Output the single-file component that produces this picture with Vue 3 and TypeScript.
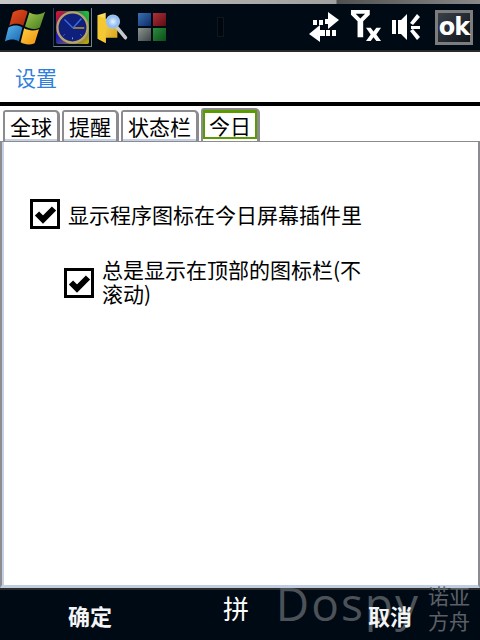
<script setup lang="ts">
import { ref } from 'vue';

const tabs = ['全球', '提醒', '状态栏', '今日'];
const activeTab = ref(3);
const showIcon = ref(true);
const pinTop = ref(true);
</script>

<template>
  <div class="screen">
    <header class="topbar">
      <svg class="logo" width="42" height="36" viewBox="0 0 48 41">
        <defs>
          <linearGradient id="wr" x1="0" y1="0" x2="1" y2="1"><stop offset="0" stop-color="#e8501f" /><stop offset="1" stop-color="#a8280c" /></linearGradient>
          <linearGradient id="wg" x1="0" y1="0" x2="1" y2="1"><stop offset="0" stop-color="#a8c850" /><stop offset="1" stop-color="#3f7a1c" /></linearGradient>
          <linearGradient id="wb" x1="0" y1="0" x2="1" y2="1"><stop offset="0" stop-color="#5cb4ec" /><stop offset="1" stop-color="#1666b0" /></linearGradient>
          <linearGradient id="wy" x1="0" y1="0" x2="1" y2="1"><stop offset="0" stop-color="#ffd040" /><stop offset="1" stop-color="#f09010" /></linearGradient>
        </defs>
        <path d="M10 4 C16 0 22 0 27 3 L22 19 C17 16 11 16 6 19 Z" fill="url(#wr)" />
        <path d="M29 4 C35 7 41 7 47 3 L41 21 C35 24 30 23 24 20 Z" fill="url(#wg)" />
        <path d="M5 21 C11 18 16 18 21 21 L17 37 C12 34 7 34 1 37 Z" fill="url(#wb)" />
        <path d="M23 22 C29 25 34 25 40 23 L35 39 C30 41 24 41 19 38 Z" fill="url(#wy)" />
      </svg>
      <div class="clock-wrap">
        <svg width="33" height="33" viewBox="0 0 35 35">
          <defs>
            <linearGradient id="cbg" x1="0" y1="0" x2="1" y2="1"><stop offset="0" stop-color="#e81818" /><stop offset=".4" stop-color="#1818c0" /><stop offset="1" stop-color="#c8b000" /></linearGradient>
            <linearGradient id="cbg2" x1="1" y1="0" x2="0" y2="1"><stop offset="0" stop-color="#20d020" /><stop offset=".45" stop-color="#20d020" stop-opacity="0" /></linearGradient>
          </defs>
          <rect width="35" height="35" rx="2" fill="url(#cbg)" />
          <rect width="35" height="35" rx="2" fill="url(#cbg2)" />
          <circle cx="17.500" cy="17.500" r="16" fill="#0f1f7c" stroke="#b8a468" stroke-width="2.400" />
          <path d="M18 18 L30 18" stroke="#d8a820" stroke-width="1.400" />
          <path d="M18 18 L27 8 M18 18 L9 9" stroke="#3c6ee0" stroke-width="1.400" />
          <path d="M17.500 28 v2 M9 25 l-1 1 M26 25 l1 1" stroke="#8c9ad8" />
        </svg>
      </div>
      <svg class="finder" width="32" height="34" viewBox="0 0 34 38">
        <defs>
          <linearGradient id="fd" x1="0" y1="0" x2="1" y2="1"><stop offset="0" stop-color="#ffe870" /><stop offset="1" stop-color="#d89c10" /></linearGradient>
          <radialGradient id="gl"><stop offset="0" stop-color="#e8f4ff" /><stop offset="1" stop-color="#7ab0f0" /></radialGradient>
        </defs>
        <path d="M1 6 L10 3 L10 10 L23 13 L23 31 L10 31 L10 37 L1 32 Z" fill="url(#fd)" />
        <path d="M10 10 L10 37 L1 32 L1 6 Z" fill="#f4c830" />
        <path d="M23 20 L32 31" stroke="#c8c8c8" stroke-width="4" stroke-linecap="round" />
        <circle cx="18" cy="13" r="7" fill="url(#gl)" stroke="#9cc0e8" stroke-width="2" />
      </svg>
      <div class="app-grid">
        <i class="sq sq-blue"></i>
        <i class="sq sq-red"></i>
        <i class="sq sq-gray"></i>
        <i class="sq sq-green"></i>
      </div>
      <i class="ghost"></i>
      <div class="spacer"></div>
      <svg width="32" height="32" viewBox="0 0 32 32" fill="#fff">
        <path d="M5 9 h4 v5 h-4 Z M11 9 h4 v5 h-4 Z M17 8 h3 v-7 L31 9 L20 18 v-5 h-3 Z" />
        <path d="M18 19 h4 v6 h-4 Z M24 19 h4 v6 h-4 Z M12 14 v5 h5 v6 h-5 v6 L1 23 Z" />
      </svg>
      <svg class="signal" width="32" height="31" viewBox="0 0 32 33" fill="#fff">
        <path d="M0 0 h20 v5 l-7 7 v17 h-6 V12 L0 5 Z M5 4 l5 5 l5 -5 Z" fill-rule="evenodd" />
        <path d="M16 19 h5 l3 4 l3 -4 h5 l-5 7 l5 7 h-5 l-3 -4 l-3 4 h-5 l5 -7 Z" />
      </svg>
      <svg class="sound" width="30" height="32" viewBox="0 0 30 32" fill="#fff">
        <path d="M1 9 h4 v14 H1 Z M7 9 h3 l6 -6 v26 l-6 -6 H7 Z" />
        <path d="M19 12 L26 3 L29 6 L22 14 Z M20 15 H29 V18 H20 Z M19 20 L22 18 L29 26 L26 29 Z" />
      </svg>
      <button class="ok" type="button">ok</button>
    </header>

    <div class="title">设置</div>

    <nav class="tabs">
      <span
        v-for="(tab, i) in tabs"
        :key="tab"
        class="tab"
        :class="{ active: i === activeTab }"
      ><span class="tab-in">{{ tab }}</span></span>
    </nav>

    <main class="panel">
      <label class="check first">
        <input v-model="showIcon" type="checkbox" />
        <svg class="box" viewBox="0 0 30 30">
          <rect x="1.500" y="1.500" width="27" height="27" fill="#fff" stroke="#000" stroke-width="3" />
          <path d="M7 14.500 L13 20.500 L24 9.500" fill="none" stroke="#000" stroke-width="6" />
        </svg>
        <span>显示程序图标在今日屏幕插件里</span>
      </label>
      <label class="check second">
        <input v-model="pinTop" type="checkbox" />
        <svg class="box" viewBox="0 0 30 30">
          <rect x="1.500" y="1.500" width="27" height="27" fill="#fff" stroke="#000" stroke-width="3" />
          <path d="M7 14.500 L13 20.500 L24 9.500" fill="none" stroke="#000" stroke-width="6" />
        </svg>
        <span>总是显示在顶部的图标栏(不滚动)</span>
      </label>
    </main>

    <footer class="softkeys">
      <span class="key">确定</span>
      <span class="ime">拼</span>
      <span class="key">取消</span>
    </footer>

    <div class="watermark">
      <span class="brand">Dospy</span>
      <span class="brand-cn">诺亚<br />方舟</span>
    </div>
  </div>
</template>

<style scoped>
.screen {
  position: relative;
  width: 480px;
  height: 640px;
  display: flex;
  flex-direction: column;
  overflow: hidden;
  background: #fff;
  font-family: "Noto Sans CJK SC", "Liberation Sans", sans-serif;
  color: #000;
}

.topbar {
  flex: none;
  height: 52px;
  box-sizing: border-box;
  display: flex;
  align-items: center;
  padding: 4px 7px 0 4px;
  background: linear-gradient(to right, #c8c8c8 0, #a0a0a0 336px, #505050 337px, #888 480px) top / 100% 4px no-repeat, #000a14;
  border-bottom: 2px solid #2a2a2a;
}

.logo {
  flex: none;
  margin-right: 7px;
}

.clock-wrap {
  flex: none;
  width: 39px;
  height: 39px;
  box-sizing: border-box;
  padding: 3px 2px 0;
  border-right: 1px solid #7a8288;
  border-bottom: 1px solid #7a8288;
  border-left: 1px solid #2a3c58;
}

.clock-wrap svg {
  display: block;
}

.finder {
  flex: none;
  margin-left: 4px;
}

.app-grid {
  flex: none;
  display: grid;
  grid-template-columns: 13px 13px;
  grid-auto-rows: 13px;
  gap: 2px;
  margin-left: 10px;
}

.sq {
  display: block;
}

.sq-blue { background: linear-gradient(135deg, #3c70b0, #0c2c68); }
.sq-red { background: linear-gradient(135deg, #b03038, #5c0c14); }
.sq-gray { background: linear-gradient(135deg, #8c9494, #3c4444); }
.sq-green { background: linear-gradient(135deg, #2c8c3c, #0c4c18); }

.ghost {
  width: 5px;
  height: 18px;
  margin-left: 51px;
  background: #00060c;
  border: 1px solid #0c1820;
}

.spacer {
  flex: 1;
}

.signal {
  margin: -3px 9px 0 10px;
}

.sound {
  margin-right: 14px;
}

.ok {
  width: 38px;
  height: 35px;
  box-sizing: border-box;
  padding: 0 0 3px;
  border: 3px solid #7c7c7c;
  background: linear-gradient(135deg, #3a4048, #10161c);
  color: #fff;
  font: bold 24px "DejaVu Sans", sans-serif;
  letter-spacing: -1px;
}

.title {
  flex: none;
  height: 54px;
  box-sizing: border-box;
  padding-left: 15px;
  line-height: 51px;
  font-size: 21px;
  color: #2f80dc;
  border-bottom: 4px solid #000;
}

.tabs {
  flex: none;
  height: 35px;
  box-sizing: border-box;
  display: flex;
  align-items: flex-end;
  gap: 2px;
  padding-left: 3px;
}

.tab {
  box-sizing: border-box;
  height: 31px;
  border: 2px solid #8c8c90;
  border-bottom: 0;
  border-right-width: 3px;
  border-radius: 3px 5px 0 0;
  background: #fff;
  box-shadow: inset 0 -2px 0 #c4d0e4;
}

.tab-in {
  display: block;
  padding: 0 5px;
  font-size: 21px;
  line-height: 29px;
}

.tab.active {
  height: 33px;
  border-width: 2px 3px 0 2px;
  box-shadow: none;
  padding-bottom: 2px;
}

.tab.active .tab-in {
  padding: 0 4px;
  line-height: 24px;
  border: 2px solid #5a9c00;
  border-top-width: 3px;
}

.panel {
  flex: 1;
  min-height: 0;
  box-sizing: border-box;
  padding: 57px 20px 0 0;
  background: #fff;
  border: 2px solid #8c8c90;
  border-top-width: 1px;
  border-bottom: 3px solid #c0cce0;
  box-shadow: inset 2px 0 0 #c4d0e4;
}

.check {
  display: flex;
  font-size: 21px;
  line-height: 24px;
}

.check input {
  display: none;
}

.box {
  flex: none;
  width: 30px;
  height: 30px;
}

.first {
  margin-left: 28px;
  gap: 8px;
  align-items: center;
}

.second {
  margin: 39px 0 0 62px;
  gap: 8px;
  align-items: flex-start;
}

.second span {
  margin-top: -11px;
  width: 262px;
}

.softkeys {
  flex: none;
  height: 52px;
  box-sizing: border-box;
  display: flex;
  justify-content: space-between;
  align-items: center;
  padding: 0 68px;
  color: #f4f4f4;
  background: #000a14;
  border-top: 2px solid #2c2c2c;
}

.key {
  font-size: 22px;
  font-weight: 700;
  position: relative;
  z-index: 2;
}

.ime {
  margin: -14px 0 0 -8px;
  font-size: 26px;
  line-height: 32px;
  color: #fff;
}

.watermark {
  position: absolute;
  right: 10px;
  bottom: 7px;
  display: flex;
  align-items: flex-end;
  gap: 8px;
  color: #5c6066;
  pointer-events: none;
}

.brand {
  font: 46px/52px "Open Sans", sans-serif;
  letter-spacing: 2px;
  color: #4c5258;
  margin-bottom: 4px;
}

.brand-cn {
  font-size: 21px;
  line-height: 25px;
}
</style>

<style>
html, body { margin: 0; background: #fff; }
</style>
